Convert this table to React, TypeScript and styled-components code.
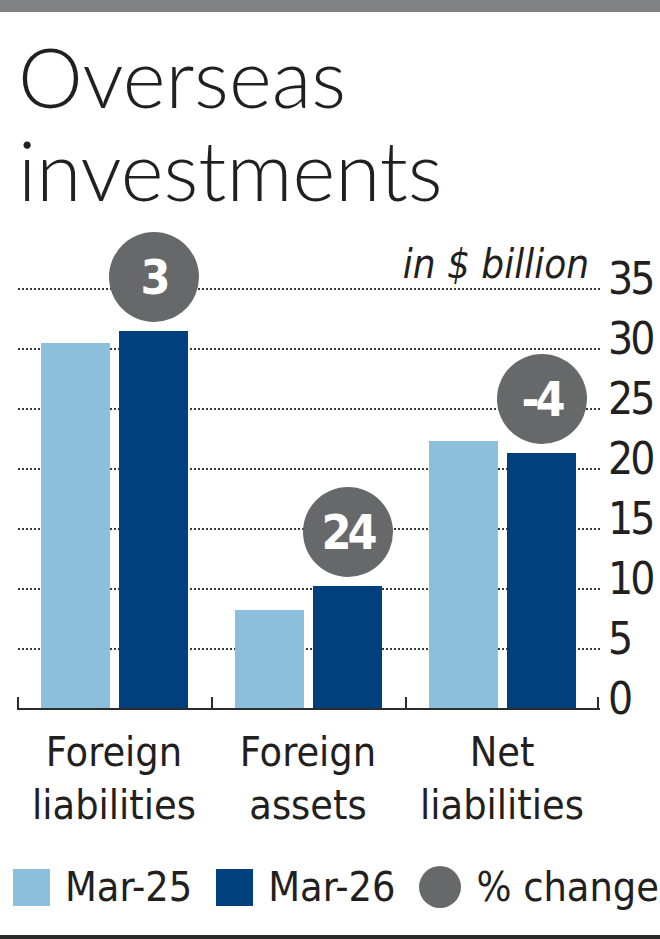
import React from 'react';
import styled, { createGlobalStyle } from 'styled-components';

const INK = '#231f20';
const LIGHT = '#8bbfdb';
const DARK = '#00407f';
const BUBBLE = '#67686a';
const COND = `"DejaVu Sans Condensed", "DejaVu Sans", sans-serif`;
const UNIT = 12; // px per $1 billion

const GlobalStyle = createGlobalStyle`
  html, body {
    margin: 0;
    padding: 0;
    background: #fff;
  }
  body {
    width: 660px;
    height: 939px;
    overflow: hidden;
  }
`;

const Page = styled.div`
  display: flex;
  flex-direction: column;
  height: 939px;
  color: ${INK};
`;

const TopBar = styled.div`
  height: 12px;
  background: #808184;
`;

const Title = styled.h1`
  margin: 18px 0 0 18px;
  font-family: Lato, 'Open Sans', sans-serif;
  font-weight: 300;
  font-size: 82px;
  line-height: 93px;
  color: ${INK};
`;

const ChartRow = styled.div`
  display: flex;
  margin-top: 24px;
`;

const PlotColumn = styled.div`
  display: flex;
  flex-direction: column;
  width: 583px;
  margin-left: 17px;
`;

const UnitLabel = styled.div`
  height: 48px;
  padding-right: 11px;
  text-align: right;
  font-family: ${COND};
  font-stretch: condensed;
  font-style: italic;
  font-size: 40px;
  line-height: 48px;
`;

const Plot = styled.div`
  display: flex;
  height: 420px;
  border-bottom: 2px solid #2b2b2b;
  background-image: radial-gradient(circle at 2px 1px, #3a3a3a 0.8px, transparent 1.3px);
  background-size: 4px 60px;
`;

const Group = styled.div<{ $last?: boolean }>`
  flex: 0 0 194px;
  display: flex;
  align-items: flex-end;
  gap: 9px;
  padding-left: 24px;
  box-sizing: border-box;
  background:
    linear-gradient(#2b2b2b, #2b2b2b) left bottom / 2px 11px no-repeat
    ${(p) => (p.$last ? ', linear-gradient(#2b2b2b, #2b2b2b) right bottom / 2px 11px no-repeat' : '')};
`;

const Bar = styled.div<{ $tone: 'light' | 'dark' }>`
  position: relative;
  width: 69px;
  background: ${(p) => (p.$tone === 'light' ? LIGHT : DARK)};
`;

const Bubble = styled.div`
  position: absolute;
  left: 50%;
  bottom: calc(100% + 9px);
  transform: translateX(-50%);
  width: 90px;
  height: 90px;
  border-radius: 50%;
  background: ${BUBBLE};
  display: flex;
  align-items: center;
  justify-content: center;
  color: #fff;
  font-family: ${COND};
  font-stretch: condensed;
  font-weight: 700;
  font-size: 48px;
  letter-spacing: -4px;
`;

const CategoryRow = styled.div`
  display: flex;
  margin-top: 16px;
`;

const CategoryLabel = styled.div`
  flex: 0 0 194px;
  text-align: center;
  font-family: ${COND};
  font-stretch: condensed;
  font-size: 41px;
  line-height: 53px;
`;

const AxisCol = styled.div`
  display: flex;
  flex-direction: column;
  margin-left: 8px;
  padding-top: 9px;
`;

const AxisLabel = styled.div`
  height: 60px;
  font-family: ${COND};
  font-stretch: condensed;
  font-size: 44px;
  line-height: 60px;
  letter-spacing: -3px;
`;

const Legend = styled.div`
  display: flex;
  align-items: center;
  margin-top: 30px;
  padding-left: 13px;
`;

const Swatch = styled.div<{ $color: string; $round?: boolean }>`
  flex: none;
  width: ${(p) => (p.$round ? 42 : 37)}px;
  height: ${(p) => (p.$round ? 42 : 37)}px;
  border-radius: ${(p) => (p.$round ? '50%' : '0')};
  background: ${(p) => p.$color};
`;

const LegendText = styled.span`
  margin: 0 24px 0 15px;
  font-family: ${COND};
  font-stretch: condensed;
  font-size: 41px;
  line-height: 50px;
  white-space: nowrap;
`;

const Spacer = styled.div`
  flex: 1;
`;

const BottomRule = styled.div`
  height: 4px;
  background: #2b2b2b;
`;

const groups = [
  { label: ['Foreign', 'liabilities'], prev: 30.4, curr: 31.4, change: '3' },
  { label: ['Foreign', 'assets'], prev: 8.2, curr: 10.2, change: '24' },
  { label: ['Net', 'liabilities'], prev: 22.25, curr: 21.25, change: '-4' },
];

const ticks = [35, 30, 25, 20, 15, 10, 5, 0];

export default function App() {
  return (
    <>
      <GlobalStyle />
      <Page>
        <TopBar />
        <Title>
          Overseas
          <br />
          investments
        </Title>
        <ChartRow>
          <PlotColumn>
            <UnitLabel>in $ billion</UnitLabel>
            <Plot>
              {groups.map((g, i) => (
                <Group key={g.label.join(' ')} $last={i === groups.length - 1}>
                  <Bar $tone="light" style={{ height: g.prev * UNIT }} />
                  <Bar $tone="dark" style={{ height: g.curr * UNIT }}>
                    <Bubble>{g.change}</Bubble>
                  </Bar>
                </Group>
              ))}
            </Plot>
            <CategoryRow>
              {groups.map((g) => (
                <CategoryLabel key={g.label.join(' ')}>
                  {g.label[0]}
                  <br />
                  {g.label[1]}
                </CategoryLabel>
              ))}
            </CategoryRow>
          </PlotColumn>
          <AxisCol>
            {ticks.map((t) => (
              <AxisLabel key={t}>{t}</AxisLabel>
            ))}
          </AxisCol>
        </ChartRow>
        <Legend>
          <Swatch $color={LIGHT} />
          <LegendText>Mar-25</LegendText>
          <Swatch $color={DARK} />
          <LegendText>Mar-26</LegendText>
          <Swatch $color={BUBBLE} $round />
          <LegendText>% change</LegendText>
        </Legend>
        <Spacer />
        <BottomRule />
      </Page>
    </>
  );
}
